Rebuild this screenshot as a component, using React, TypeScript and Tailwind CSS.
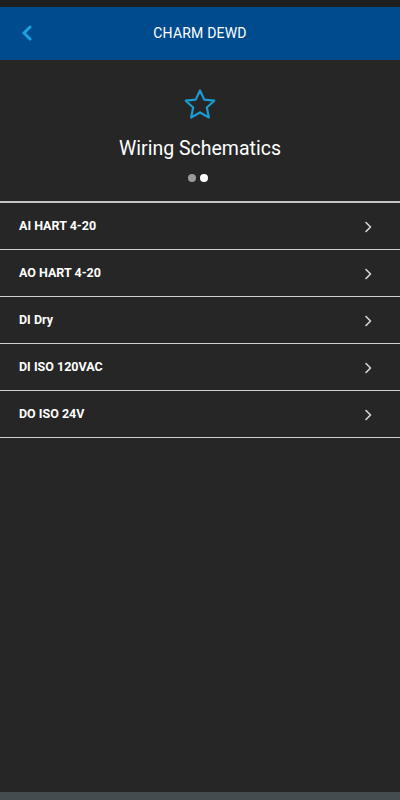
import React from "react";

const items = ["AI HART 4-20", "AO HART 4-20", "DI Dry", "DI ISO 120VAC", "DO ISO 24V"];

export default function App() {
  return (
    <div
      className="w-[400px] h-[800px] bg-[#262626] flex flex-col overflow-hidden"
      style={{ fontFamily: "Roboto, 'Noto Sans', sans-serif" }}
    >
      <div className="h-[7px] bg-[#1e1e1e]" />
      <div className="h-[53px] bg-[#004b8d] flex items-center relative">
        <div className="absolute left-[20px] top-[18px]">
          <svg width="14" height="16" viewBox="0 0 14 16">
            <path d="M10 2 L4 8 L10 14" fill="none" stroke="#1ba3e0" strokeWidth="3" strokeLinecap="round" strokeLinejoin="round" />
          </svg>
        </div>
        <div className="flex-1 text-center text-white text-[14px] tracking-[0.2px]">CHARM DEWD</div>
      </div>
      <div className="flex flex-col items-center pt-[26px]">
        <svg width="40" height="38" viewBox="0 0 24 24">
          <path
            d="M12 2.8 L14.7 8.6 L21 9.3 L16.3 13.6 L17.6 19.9 L12 16.7 L6.4 19.9 L7.7 13.6 L3 9.3 L9.3 8.6 Z"
            fill="none"
            stroke="#1b9bd4"
            strokeWidth="1.4"
            strokeLinejoin="round"
          />
        </svg>
        <div className="mt-[13px] text-white text-[19.5px] leading-[24px]">Wiring Schematics</div>
        <div className="mt-[13px] flex gap-[4px] pr-[4px]">
          <div className="w-[8px] h-[8px] rounded-full bg-[#9a9a9a]" />
          <div className="w-[8px] h-[8px] rounded-full bg-white" />
        </div>
      </div>
      <div className="mt-[19px] border-t-2 border-[#c4c4c4]">
        {items.map((t) => (
          <div key={t} className="h-[47px] flex items-center justify-between pl-[19px] pr-[28px] pt-[1px] border-b border-[#d0d0d0]">
            <span className="text-white text-[12.5px] font-bold">{t}</span>
            <svg width="8" height="12" viewBox="0 0 8 12">
              <path d="M2 1.5 L6.5 6 L2 10.5" fill="none" stroke="#d8d8d8" strokeWidth="1.6" strokeLinecap="round" strokeLinejoin="round" />
            </svg>
          </div>
        ))}
      </div>
      <div className="flex-1" />
      <div className="h-[8px] bg-[#444c50]" />
    </div>
  );
}
